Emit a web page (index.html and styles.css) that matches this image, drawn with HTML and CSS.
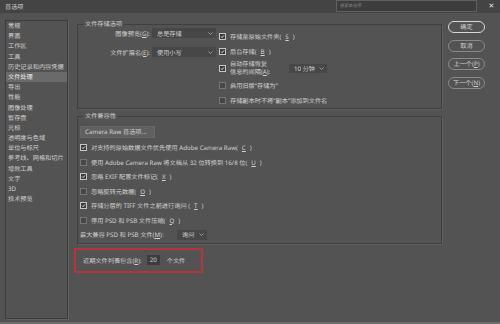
FILE: index.html
```html
<!DOCTYPE html>
<html lang="zh-CN">
<head>
  <meta charset="UTF-8" />
  <title>首选项</title>
  <link rel="stylesheet" href="styles.css">
</head>
<body>
  <div class="window">

    <header class="titlebar">
      <span class="title">首选项</span>
      <div class="title-right">
        <div class="search">搜索首选项</div>
        <span class="close">✕</span>
      </div>
    </header>

    <div class="dialog">
      <!-- category list -->
      <ul class="nav">
        <li>常规</li>
        <li>界面</li>
        <li>工作区</li>
        <li>工具</li>
        <li>历史记录和内容凭据</li>
        <li class="active">文件处理</li>
        <li>导出</li>
        <li>性能</li>
        <li>图像处理</li>
        <li>暂存盘</li>
        <li>光标</li>
        <li>透明度与色域</li>
        <li>单位与标尺</li>
        <li>参考线、网格和切片</li>
        <li>增效工具</li>
        <li>文字</li>
        <li>3D</li>
        <li>技术预览</li>
      </ul>

      <main class="content">
        <fieldset class="group">
          <legend>文件存储选项</legend>
          <div class="save">
            <div class="save-left">
              <div class="field">
                <label>图像预览(<u>G</u>):</label>
                <div class="select">总是存储 <svg width="5" height="3" viewBox="0 0 5 3"><polyline points="0.5,0.5 2.5,2.5 4.5,0.5" fill="none" stroke="#a8a8a8" stroke-width="0.8"/></svg></div>
              </div>
              <div class="field">
                <label>文件扩展名(<u>E</u>):</label>
                <div class="select">使用小写 <svg width="5" height="3" viewBox="0 0 5 3"><polyline points="0.5,0.5 2.5,2.5 4.5,0.5" fill="none" stroke="#a8a8a8" stroke-width="0.8"/></svg></div>
              </div>
            </div>
            <div class="save-right">
              <div class="check"><span class="box on"><svg viewBox="0 0 8 8"><polyline points="1.6,4.1 3.3,5.8 6.4,2.2" fill="none" stroke="#fff" stroke-width="1.3"/></svg></span>存储至原始文件夹(<u>S</u>)</div>
              <div class="check"><span class="box on"><svg viewBox="0 0 8 8"><polyline points="1.6,4.1 3.3,5.8 6.4,2.2" fill="none" stroke="#fff" stroke-width="1.3"/></svg></span>后台存储(<u>B</u>)</div>
              <div class="check tall">
                <span class="box on"><svg viewBox="0 0 8 8"><polyline points="1.6,4.1 3.3,5.8 6.4,2.2" fill="none" stroke="#fff" stroke-width="1.3"/></svg></span>
                <span class="txt"><span>自动存储恢复</span><span>信息的间隔(<u>A</u>):</span></span>
                <div class="select small">10 分钟 <svg width="5" height="3" viewBox="0 0 5 3"><polyline points="0.5,0.5 2.5,2.5 4.5,0.5" fill="none" stroke="#a8a8a8" stroke-width="0.8"/></svg></div>
              </div>
              <div class="check"><span class="box"></span>启用旧版“存储为”</div>
              <div class="check"><span class="box"></span>存储副本时不将“副本”添加到文件名</div>
            </div>
          </div>
        </fieldset>

        <fieldset class="group compat">
          <legend>文件兼容性</legend>
          <div class="compat-list">
            <div class="btn">Camera Raw 首选项...</div>
            <div class="check"><span class="box on"><svg viewBox="0 0 8 8"><polyline points="1.6,4.1 3.3,5.8 6.4,2.2" fill="none" stroke="#fff" stroke-width="1.3"/></svg></span>对支持的原始数据文件优先使用 Adobe Camera Raw(<u>C</u>)</div>
            <div class="check"><span class="box"></span>使用 Adobe Camera Raw 将文档从 32 位转换到 16/8 位(<u>U</u>)</div>
            <div class="check"><span class="box on"><svg viewBox="0 0 8 8"><polyline points="1.6,4.1 3.3,5.8 6.4,2.2" fill="none" stroke="#fff" stroke-width="1.3"/></svg></span>忽略 EXIF 配置文件标记(<u>X</u>)</div>
            <div class="check"><span class="box"></span>忽略旋转元数据(<u>O</u>)</div>
            <div class="check"><span class="box on"><svg viewBox="0 0 8 8"><polyline points="1.6,4.1 3.3,5.8 6.4,2.2" fill="none" stroke="#fff" stroke-width="1.3"/></svg></span>存储分层的 TIFF 文件之前进行询问 (<u>T</u>)</div>
            <div class="check"><span class="box"></span>停用 PSD 和 PSB 文件压缩(<u>Q</u>)</div>
            <div class="field left">
              <label>最大兼容 PSD 和 PSB 文件(<u>M</u>):</label>
              <div class="select tiny">询问 <svg width="5" height="3" viewBox="0 0 5 3"><polyline points="0.5,0.5 2.5,2.5 4.5,0.5" fill="none" stroke="#a8a8a8" stroke-width="0.8"/></svg></div>
            </div>
          </div>
        </fieldset>

        <div class="recent">
          <label>近期文件列表包含(<u>R</u>):</label>
          <span class="num">20</span>
          <span>个文件</span>
        </div>
      </main>

      <aside class="actions">
        <div class="pill default">确定</div>
        <div class="pill">取消</div>
        <div class="pill">上一个(<u>P</u>)</div>
        <div class="pill">下一个(<u>N</u>)</div>
      </aside>
    </div>

  </div>
</body>
</html>
```

FILE: styles.css
```css
* {
  box-sizing: border-box;
}

body {
  margin: 0;
  background: #535353;
  font-family: "Noto Sans", "Noto Sans CJK SC", sans-serif;
  font-size: 6.2px;
  color: #d0d0d0;
  text-rendering: geometricPrecision;
}

u {
  text-decoration-thickness: 0.5px;
  text-underline-offset: 0.5px;
}

.window {
  width: 500px;
  height: 324px;
  display: flex;
  flex-direction: column;
  border-bottom: 2px solid #6c6c6c;
  overflow: hidden;
}

/* title bar */
.titlebar {
  height: 13px;
  flex: none;
  background: #444444;
  display: flex;
  justify-content: space-between;
  padding-left: 5px;
}

.title {
  line-height: 13px;
}

.title-right {
  display: flex;
}

.search {
  width: 141px;
  height: 12px;
  background: #3d3d3d;
  border: 1px solid #606060;
  font-size: 4.3px;
  line-height: 10px;
  padding-left: 3px;
  color: #858585;
}

.close {
  width: 17px;
  margin-left: 6px;
  text-align: center;
  line-height: 13px;
  font-size: 7px;
  color: #e0e0e0;
}

/* body */
.dialog {
  flex: 1;
  display: flex;
  padding-top: 7px;
}

.nav {
  list-style: none;
  margin: 0 0 0 5px;
  padding: 0;
  width: 63px;
  height: 299px;
  border: 1px solid #3c3c3c;
  box-shadow: 1px 1px 0 #616161;
}

.nav li {
  height: 10.2px;
  line-height: 10.2px;
  padding-left: 2px;
  white-space: nowrap;
}

.nav li.active {
  background: #6a6a6a;
  color: #ececec;
}

.content {
  margin-left: 9px;
  width: 365px;
}

fieldset.group {
  margin: 0;
  min-width: 0;
  padding: 0 3px 3px 2px;
  border: 1px solid #3f3f3f;
  box-shadow: 1px 1px 0 #5e5e5e;
}

legend {
  margin-left: 3px;
  padding: 0 2px;
  line-height: 8px;
}

/* file save options */
.save {
  display: flex;
  gap: 3px;
}

.save-left {
  width: 136px;
  display: flex;
  flex-direction: column;
  gap: 9px;
}

.field {
  display: flex;
  align-items: center;
  height: 10px;
}

.field label {
  flex: 1;
  text-align: right;
  padding-right: 2px;
  white-space: nowrap;
}

.field.left label {
  flex: none;
  width: 95px;
  text-align: left;
  padding-right: 0;
}

.select {
  width: 64px;
  height: 10px;
  background: #474747;
  display: flex;
  align-items: center;
  justify-content: space-between;
  padding: 0 3px 0 5px;
  white-space: nowrap;
}

.select.small {
  width: 38px;
  height: 9px;
}

.select.tiny {
  width: 30px;
  margin-left: 2px;
}

.save-right {
  padding-top: 3px;
  display: flex;
  flex-direction: column;
  gap: 5px;
}

.check {
  display: flex;
  align-items: center;
  gap: 4px;
  height: 10px;
  white-space: nowrap;
}

.check.tall {
  height: 16px;
  margin: -1px 0;
}

.check .txt {
  width: 55px;
  display: flex;
  flex-direction: column;
  line-height: 8px;
}

.box {
  width: 7px;
  height: 7px;
  flex: none;
  display: flex;
  border: 1px solid #767676;
  background: #474747;
}

.box.on {
  border-color: #c6c6c6;
  background: #3b3b3b;
}

.box svg {
  width: 100%;
  height: 100%;
}

/* file compatibility */
.group.compat {
  margin-top: 3px;
}

.compat-list {
  display: flex;
  flex-direction: column;
  gap: 4.5px;
  padding-top: 6px;
}

.btn {
  align-self: flex-start;
  width: 75px;
  height: 12px;
  background: #606060;
  border: 1px solid #686868;
  line-height: 10px;
  padding-left: 4px;
  white-space: nowrap;
}

/* highlighted recent files row */
.recent {
  margin: 4px 0 0 -3px;
  width: 129px;
  height: 25px;
  border: 2px solid #b4353e;
  display: flex;
  align-items: center;
  padding-left: 7px;
  white-space: nowrap;
}

.num {
  width: 13px;
  height: 10px;
  margin: 0 7px 0 5px;
  background: #3c3c3c;
  text-align: center;
  line-height: 10px;
}

/* dialog buttons */
.actions {
  margin-left: 6px;
  padding-top: 1px;
  width: 37px;
  display: flex;
  flex-direction: column;
  gap: 6.5px;
}

.pill {
  height: 12px;
  border: 1px solid #8a8a8a;
  border-radius: 6px;
  text-align: center;
  line-height: 10px;
  white-space: nowrap;
}

.pill.default {
  border-color: #d8d8d8;
}
```
